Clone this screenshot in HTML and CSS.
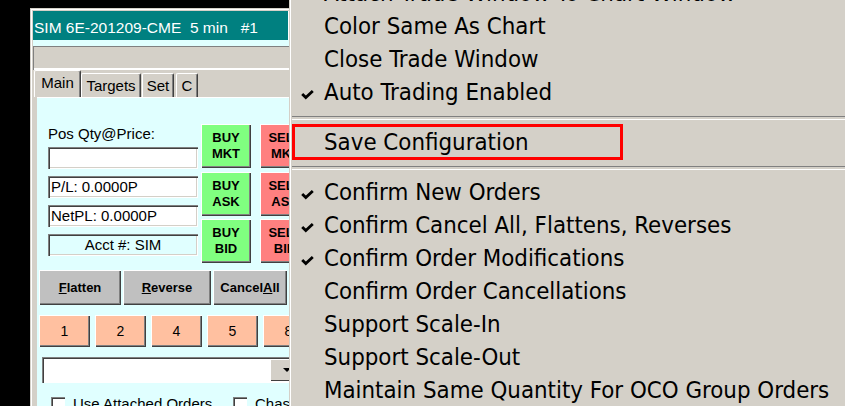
FILE: index.html
```html
<!DOCTYPE html>
<html>
<head>
<meta charset="utf-8">
<link rel="stylesheet" href="styles.css">
</head>
<body>
<div class="desk">
  <div class="win">
    <div class="title">SIM 6E-201209-CME  5 min   #1</div>
    <div class="strip"></div>
    <div class="status"></div>
    <div class="tabs">
      <div class="tab sel">Main</div>
      <div class="tab t2">Targets</div>
      <div class="tab t3">Set</div>
      <div class="tab t4">C</div>
    </div>
    <div class="panel">
      <div class="top">
        <div class="info">
          <div class="lbl">Pos Qty@Price:</div>
          <div class="box"></div>
          <div class="box">P/L: 0.0000P</div>
          <div class="box">NetPL: 0.0000P</div>
          <div class="box acct">Acct #: SIM</div>
        </div>
        <div class="col buy">
          <div class="btn">BUY<br>MKT</div>
          <div class="btn">BUY<br>ASK</div>
          <div class="btn">BUY<br>BID</div>
        </div>
        <div class="col sell">
          <div class="btn">SELL<br>MKT</div>
          <div class="btn">SELL<br>ASK</div>
          <div class="btn">SELL<br>BID</div>
        </div>
      </div>
      <div class="actions">
        <div class="act a1"><u>F</u>latten</div>
        <div class="act a2"><u>R</u>everse</div>
        <div class="act a3">Cancel<u>A</u>ll</div>
      </div>
      <div class="nums">
        <div class="num">1</div>
        <div class="num">2</div>
        <div class="num">4</div>
        <div class="num">5</div>
        <div class="num">8</div>
      </div>
      <div class="combo">
        <div class="field"></div>
        <div class="drop"><span class="tri"></span></div>
      </div>
      <div class="checks">
        <span class="cb"></span><span class="cl">Use Attached Orders</span>
        <span class="cb cb2"></span><span class="cl">Chase</span>
      </div>
    </div>
  </div>

  <div class="menu">
    <div class="item">Attach Trade Window To Chart Window</div>
    <div class="item">Color Same As Chart</div>
    <div class="item">Close Trade Window</div>
    <div class="item"><span class="ck"><svg width="13" height="10" viewBox="0 0 13 10"><path d="M1.2 4 L4.8 7.6 L11.8 1" stroke="#000" stroke-width="2.8" fill="none"/></svg></span>Auto Trading Enabled</div>
    <div class="sep"></div>
    <div class="item hl">Save Configuration<span class="mark"></span></div>
    <div class="sep"></div>
    <div class="item"><span class="ck"><svg width="13" height="10" viewBox="0 0 13 10"><path d="M1.2 4 L4.8 7.6 L11.8 1" stroke="#000" stroke-width="2.8" fill="none"/></svg></span>Confirm New Orders</div>
    <div class="item"><span class="ck"><svg width="13" height="10" viewBox="0 0 13 10"><path d="M1.2 4 L4.8 7.6 L11.8 1" stroke="#000" stroke-width="2.8" fill="none"/></svg></span>Confirm Cancel All, Flattens, Reverses</div>
    <div class="item"><span class="ck"><svg width="13" height="10" viewBox="0 0 13 10"><path d="M1.2 4 L4.8 7.6 L11.8 1" stroke="#000" stroke-width="2.8" fill="none"/></svg></span>Confirm Order Modifications</div>
    <div class="item">Confirm Order Cancellations</div>
    <div class="item">Support Scale-In</div>
    <div class="item">Support Scale-Out</div>
    <div class="item">Maintain Same Quantity For OCO Group Orders</div>
  </div>
</div>
</body>
</html>
```

FILE: styles.css
```css
* { box-sizing: border-box; margin: 0; padding: 0; }
html, body { width: 845px; height: 406px; overflow: hidden; background: #000; }
body { font-family: "Liberation Sans", Arial, sans-serif; font-size: 15px; color: #000; }
.desk { position: relative; width: 845px; height: 406px; overflow: hidden; }

.win {
  margin: 8px 0 0 30px;
  width: 259px;
  height: 420px;
  background: #d4d0c8;
  padding: 3px 0 0 3px;
  box-shadow: inset 1px 1px #d4d0c8, inset 2px 2px #fff;
}
.title {
  height: 29px;
  background: #008080;
  color: #fff;
  font-size: 15.5px;
  padding: 4px 0 0 1px;
  line-height: 25px;
  white-space: pre;
  box-shadow: inset -1px 0 #fff;
}
.strip { height: 6px; background: #e0ffff; }
.status { height: 24px; background: #d4d0c8; box-shadow: inset 1px 1px #808080, inset 0 -2px #fff; }

.tabs { height: 27px; display: flex; align-items: flex-end; padding-left: 1px; }
.tab {
  height: 24px;
  background: #d4d0c8;
  text-align: center;
  line-height: 24px;
  border-top: 1px solid #fff;
  border-left: 1px solid #fff;
  border-right: 1px solid #404040;
  box-shadow: inset -1px 0 #808080;
  border-radius: 2px 2px 0 0;
}
.tab.sel { height: 27px; width: 47px; line-height: 24px; }
.t2 { width: 60px; }
.t3 { width: 32px; margin-left: 1px; }
.t4 { width: 22px; margin-left: 2px; }

.panel {
  margin-left: 4px;
  height: 320px;
  background: #e0ffff;
  border-top: 1px solid #fff;
  padding-left: 2px;
  overflow: hidden;
}
.top { display: flex; margin-top: 26px; padding-left: 9px; }
.info { width: 150px; padding-top: 1px; flex: none; }
.lbl { height: 17px; line-height: 17px; margin-bottom: 5px; }
.box {
  height: 22px;
  margin-bottom: 7px;
  background: #fff;
  line-height: 22px;
  padding-left: 3px;
  box-shadow: inset 1px 1px #808080, inset 2px 2px #404040, inset -1px -1px #fff, inset -2px -2px #d4d0c8;
}
.box.acct { background: #e0ffff; text-align: center; padding-left: 0; }

.col { display: flex; flex-direction: column; gap: 3.5px; width: 50px; margin-left: 3px; flex: none; }
.sell { margin-left: 9px; }
.btn {
  height: 44px;
  font-weight: bold;
  font-size: 13px;
  line-height: 16px;
  display: flex;
  align-items: center;
  justify-content: center;
  text-align: center;
  box-shadow: inset 1px 1px #fff, inset -1px -1px #404040, inset -2px -2px #808080;
}
.buy .btn { background: #80ff80; }
.sell .btn { background: #ff8080; }

.actions { display: flex; gap: 2px; margin-top: 7px; }
.act {
  height: 35px;
  background: #c0c0c0;
  font-weight: bold;
  font-size: 13px;
  display: flex;
  align-items: center;
  justify-content: center;
  flex: none;
  box-shadow: inset 1px 1px #fff, inset -1px -1px #404040, inset -2px -2px #808080;
}
.a1 { width: 82px; }
.a2 { width: 88px; }
.a3 { width: 74px; }

.nums { display: flex; gap: 5px; margin-top: 10px; }
.num {
  width: 51px;
  height: 32px;
  flex: none;
  background: #ffc0a0;
  font-size: 14px;
  display: flex;
  align-items: center;
  justify-content: center;
  box-shadow: inset 1px 1px #fff, inset -1px -1px #404040, inset -2px -2px #808080;
}

.combo { display: flex; margin: 10px 0 0 3px; height: 26px; width: 280px; background: #fff;
  box-shadow: inset 1px 1px #808080, inset 2px 2px #404040; padding: 2px 0 0 2px; }
.field { width: 226px; }
.drop { width: 36px; height: 22px; background: #d4d0c8; padding: 9px 0 0 13px;
  box-shadow: inset 1px 1px #fff, inset -1px -1px #404040; }
.tri { display: block; width: 0; height: 0; border-left: 4px solid transparent; border-right: 4px solid transparent; border-top: 4px solid #000; }

.checks { display: flex; align-items: center; margin-top: 12px; padding-left: 12px; }
.cb { width: 14px; height: 14px; background: #fff; flex: none;
  box-shadow: inset 1px 1px #808080, inset 2px 2px #404040, inset -1px -1px #fff; }
.cl { margin-left: 8px; width: 160px; flex: none; white-space: nowrap; }

.menu {
  position: absolute;
  left: 289px;
  top: -24px;
  right: -40px;
  height: 460px;
  background: #d4d0c8;
  border-left: 1px solid #d4d0c8;
  box-shadow: inset 1px 0 #fff;
  font-family: "DejaVu Sans Condensed", "DejaVu Sans", sans-serif;
  font-stretch: condensed;
  font-size: 23.8px;
  white-space: nowrap;
}
.item { position: relative; height: 33px; padding: 2px 0 0 34px; line-height: 31px; }
.ck { position: absolute; left: 11px; top: 0; }
.ck svg { position: absolute; top: 15px; left: 0; }
.sep { height: 17px; margin-left: 2px; padding-top: 8px; }
.sep::before { content: ""; display: block; height: 2px; border-top: 1px solid #808080; border-bottom: 1px solid #fff; }
.mark { position: absolute; left: 2px; top: -1px; width: 331px; height: 36px; border: 3px solid #ff0000; }
```
